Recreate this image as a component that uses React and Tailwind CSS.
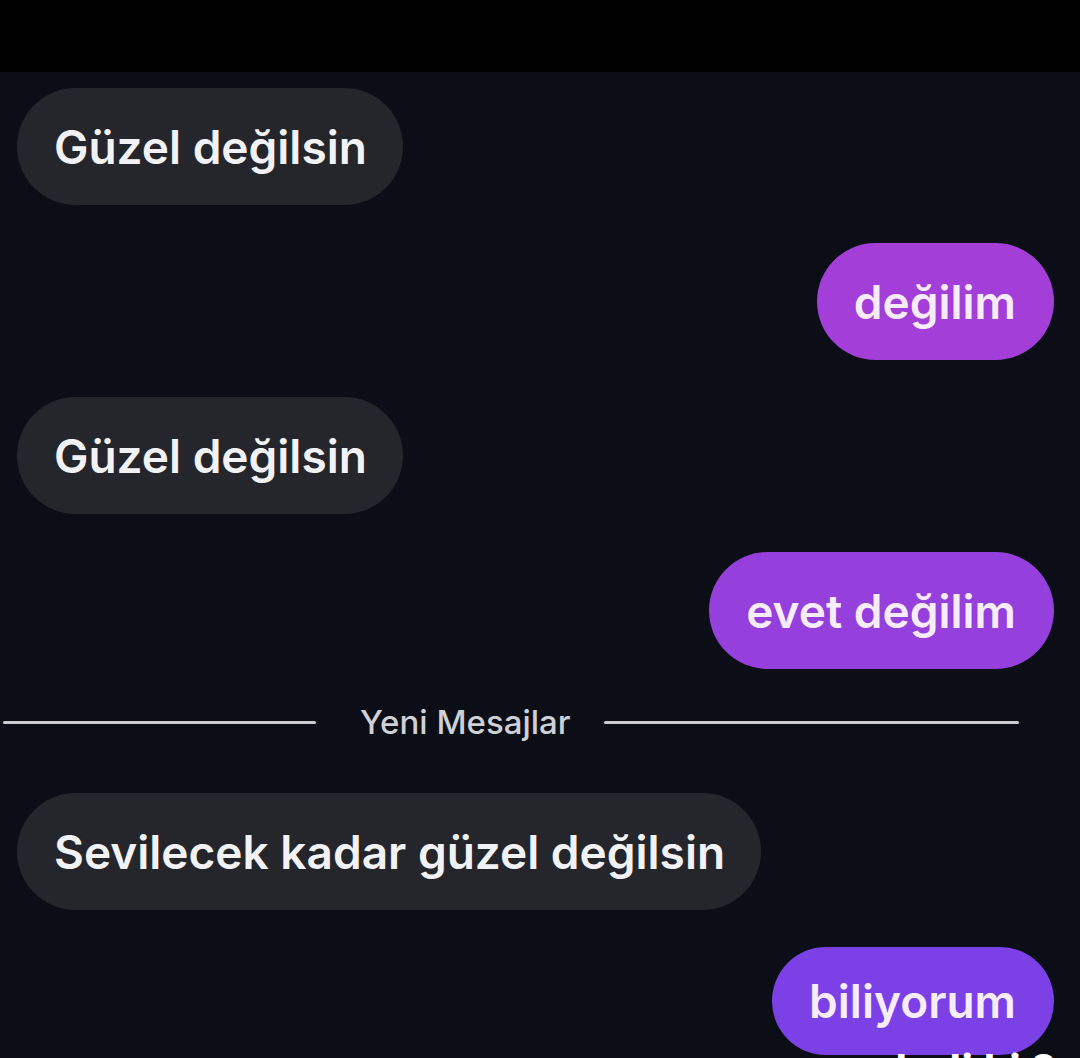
export default function App() {
  const font = { fontFamily: 'Inter, "Noto Sans", sans-serif' };
  const Left = ({ children }) => (
    <div className="flex justify-start pl-[17px] shrink-0">
      <div className="h-[117px] rounded-full bg-[#24262c] pl-[37px] pr-[36px] flex items-center text-[46px] font-semibold text-[#f2f2f4] whitespace-nowrap leading-none">
        {children}
      </div>
    </div>
  );
  const Right = ({ children, bg, h = 'h-[117px]' }) => (
    <div className="flex justify-end pr-[26px] shrink-0">
      <div className={`${h} rounded-full pl-[37px] pr-[38px] flex items-center text-[46px] font-semibold text-[#f6ecfb] whitespace-nowrap leading-none ${bg}`}>
        {children}
      </div>
    </div>
  );
  return (
    <div className="relative w-[1080px] h-[1058px] overflow-hidden bg-black" style={font}>
      <div className="h-[72px] bg-black" />
      <div className="h-[986px] overflow-hidden bg-[#0b0e16] flex flex-col pt-[16px]">
        <Left>Güzel değilsin</Left>
        <div className="h-[38px] shrink-0" />
        <Right bg="bg-[#a33ed8]">değilim</Right>
        <div className="h-[37px] shrink-0" />
        <Left>Güzel değilsin</Left>
        <div className="h-[38px] shrink-0" />
        <Right bg="bg-[#953fdc]">evet değilim</Right>
        <div className="h-[36px] shrink-0" />
        <div className="flex items-center h-[34px] pl-[3px] shrink-0">
          <div className="w-[313px] h-[3px] bg-[#c9c9ce] rounded-full" />
          <div className="ml-[44px] text-[33px] font-medium text-[#cfcfd5] leading-none">Yeni Mesajlar</div>
          <div className="ml-[33px] w-[415px] h-[3px] bg-[#c9c9ce] rounded-full" />
        </div>
        <div className="h-[54px] shrink-0" />
        <Left>Sevilecek kadar güzel değilsin</Left>
        <div className="h-[37px] shrink-0" />
        <Right bg="bg-[#7b40e6]" h="h-[108px]">biliyorum</Right>
      </div>
      <div className="absolute top-[1048px] right-[24px] text-[44px] font-bold text-white leading-none whitespace-nowrap">
        ama dedi ki ?
      </div>
    </div>
  );
}
